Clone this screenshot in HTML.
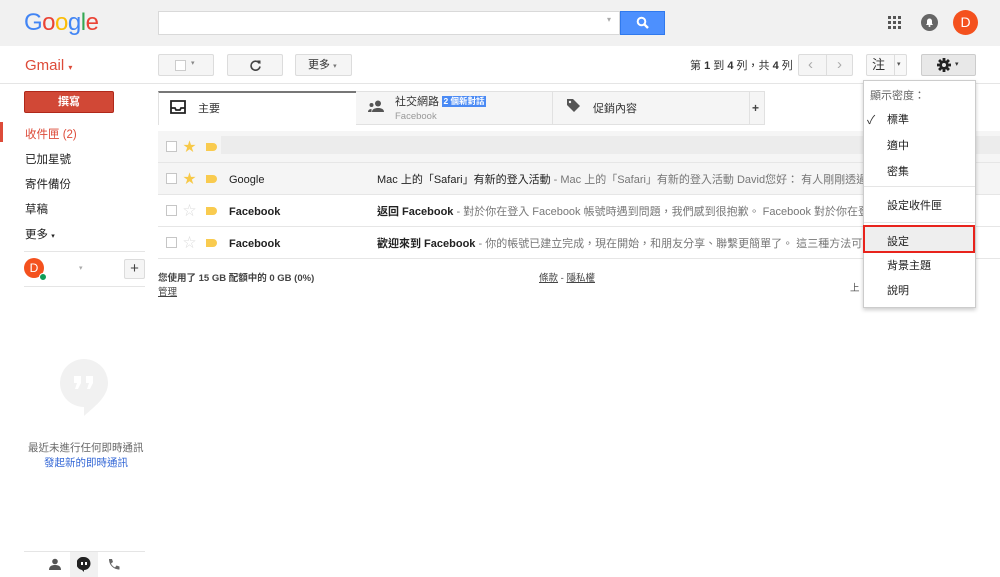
<!DOCTYPE html>
<html><head><meta charset="utf-8"><style>
*{margin:0;padding:0;box-sizing:border-box}
body{width:1000px;height:577px;overflow:hidden;background:#fff;font-family:"Liberation Sans","Noto Sans CJK TC",sans-serif;font-size:11px;color:#222;position:relative}
.a{position:absolute}
.btn{position:absolute;background:#f5f5f5;border:1px solid #dcdcdc;border-radius:2px}
.t{position:absolute;white-space:nowrap;line-height:1.6;margin-top:3px}
.btn .t{margin-top:0}
.row{position:absolute;left:158px;width:842px;border-bottom:1px solid #e6e6e6}
.cb{position:absolute;left:8px;width:11px;height:11px;border:1px solid #c6c6c6;background:#fff}
.lbl{position:absolute;left:48px;width:11px;height:8px;background:#f9cb4f;border-radius:0 4px 4px 0}
.mi{position:absolute;left:887px;font-size:11px;color:#222;line-height:1.6;margin-top:3px}
</style></head><body>
<div class="a" style="left:0;top:0;width:1000px;height:46px;background:#f1f1f1"></div>
<div class="a" style="left:24px;top:9px;font-size:24px;letter-spacing:-0.5px;line-height:28px;white-space:nowrap"><span style="color:#4285f4">G</span><span style="color:#ea4335">o</span><span style="color:#fbbc05">o</span><span style="color:#4285f4">g</span><span style="color:#34a853">l</span><span style="color:#ea4335">e</span></div>
<div class="a" style="left:158px;top:11px;width:462px;height:24px;background:#fff;border:1px solid #d9d9d9"></div>
<div class="a" style="left:607px;top:15px;color:#aaa;font-size:8px">▾</div>
<div class="a" style="left:620px;top:11px;width:45px;height:24px;background:#4d90fe;border:1px solid #3079ed"></div>
<svg class="a" style="left:636px;top:16px" width="14" height="14" viewBox="0 0 14 14"><circle cx="5.5" cy="5.5" r="3.8" fill="none" stroke="#fff" stroke-width="2"/><path d="M8.3 8.3L12 12" stroke="#fff" stroke-width="2.4"/></svg>
<svg class="a" style="left:888px;top:16px" width="14" height="14"><g fill="#555"><rect x="0" y="0" width="3" height="3"/><rect x="5" y="0" width="3" height="3"/><rect x="10" y="0" width="3" height="3"/><rect x="0" y="5" width="3" height="3"/><rect x="5" y="5" width="3" height="3"/><rect x="10" y="5" width="3" height="3"/><rect x="0" y="10" width="3" height="3"/><rect x="5" y="10" width="3" height="3"/><rect x="10" y="10" width="3" height="3"/></g></svg>
<svg class="a" style="left:921px;top:14px" width="17" height="17"><circle cx="8.5" cy="8.5" r="8.5" fill="#666"/><path d="M5 11h7l-1-1.5V7a2.5 2.5 0 0 0-5 0v2.5z" fill="#fff"/><circle cx="8.5" cy="12" r="1" fill="#fff"/></svg>
<div class="a" style="left:953px;top:10px;width:25px;height:25px;border-radius:50%;background:#f4511e;color:#fff;font-size:14px;text-align:center;line-height:25px">D</div>

<div class="t" style="left:25px;top:51px;font-size:15px;color:#dd4b39">Gmail <span style="font-size:8px">▾</span></div>
<div class="a" style="left:0;top:83px;width:1000px;height:1px;background:#e5e5e5"></div>
<div class="btn" style="left:158px;top:54px;width:56px;height:22px"><div class="a" style="left:16px;top:5px;width:11px;height:11px;border:1px solid #ccc;background:#fff"></div><div class="t" style="left:32px;top:3px;color:#888;font-size:7px">▾</div></div>
<div class="btn" style="left:227px;top:54px;width:56px;height:22px"><svg class="a" style="left:21px;top:4px" width="13" height="13"><path d="M10.5 4.5A4.5 4.5 0 1 0 11 7.5" fill="none" stroke="#444" stroke-width="1.6"/><path d="M8 1.5L11.5 1.5 11.5 5z" fill="#444"/></svg></div>
<div class="btn" style="left:295px;top:54px;width:57px;height:22px"><div class="t" style="left:12px;top:2px;font-size:11px;color:#333">更多 <span style="font-size:7px;color:#777">▾</span></div></div>

<div class="t" style="left:690px;top:55px;color:#333">第 <b>1</b> 到 <b>4</b> 列，共 <b>4</b> 列</div>
<div class="btn" style="left:798px;top:54px;width:55px;height:22px"><div class="a" style="left:27px;top:0;width:1px;height:20px;background:#ddd"></div><div class="a" style="left:9px;top:1px;color:#aaa;font-size:15px;line-height:18px">‹</div><div class="a" style="left:38px;top:1px;color:#aaa;font-size:15px;line-height:18px">›</div></div>
<div class="btn" style="left:866px;top:54px;width:41px;height:22px;background:#f8f8f8"><div class="a" style="left:5px;top:2px;font-size:13px;color:#333;line-height:16px;width:18px">注</div><div class="a" style="left:27px;top:0;width:1px;height:20px;background:#ddd"></div><div class="a" style="left:30px;top:6px;font-size:7px;color:#555;line-height:8px">▾</div></div>
<div class="btn" style="left:921px;top:54px;width:55px;height:22px;background:#e8e8e8;border-color:#ccc"><svg class="a" style="left:15px;top:3px" width="14" height="14" viewBox="0 0 14 14"><g fill="#222"><circle cx="7" cy="7" r="4.6"/><rect x="5.6" y="0" width="2.8" height="14"/><rect x="0" y="5.6" width="14" height="2.8"/><rect x="5.6" y="0" width="2.8" height="14" transform="rotate(45 7 7)"/><rect x="5.6" y="0" width="2.8" height="14" transform="rotate(-45 7 7)"/></g><circle cx="7" cy="7" r="2" fill="#e8e8e8"/></svg><div class="a" style="left:33px;top:6px;font-size:7px;color:#333;line-height:8px">▾</div></div>

<div class="a" style="left:24px;top:91px;width:90px;height:22px;background:#d14836;border:1px solid #b0281a;border-radius:2px;color:#fff;font-weight:bold;text-align:center;line-height:20px;font-size:11px">撰寫</div>
<div class="a" style="left:0;top:122px;width:3px;height:20px;background:#dd4b39"></div>
<div class="t" style="left:25px;top:123px;color:#dd4b39;font-size:11.5px">收件匣 (2)</div>
<div class="t" style="left:25px;top:148px;color:#222;font-size:11.5px">已加星號</div>
<div class="t" style="left:25px;top:173px;color:#222;font-size:11.5px">寄件備份</div>
<div class="t" style="left:25px;top:198px;color:#222;font-size:11.5px">草稿</div>
<div class="t" style="left:25px;top:223px;color:#222;font-size:11.5px">更多 <span style="font-size:7px">▾</span></div>
<div class="a" style="left:24px;top:251px;width:121px;height:1px;background:#e5e5e5"></div>
<div class="a" style="left:24px;top:258px;width:20px;height:20px;border-radius:50%;background:#f4511e;color:#fff;text-align:center;line-height:20px;font-size:12px">D</div>
<div class="a" style="left:39px;top:273px;width:8px;height:8px;border-radius:50%;background:#0f9d58;border:1px solid #fff"></div>
<div class="a" style="left:79px;top:264px;color:#aaa;font-size:7px">▾</div>
<div class="btn" style="left:124px;top:259px;width:21px;height:20px;font-size:15px;text-align:center;line-height:17px;color:#444">+</div>
<div class="a" style="left:24px;top:286px;width:121px;height:1px;background:#e5e5e5"></div>

<svg class="a" style="left:60px;top:359px" width="48" height="60"><path d="M24 0a24 24 0 0 1 24 24c0 14-14 24-24 33v-9A24 24 0 0 1 24 0z" fill="#f1f1f1"/><path d="M14 17h7v7l-3 6h-3l2-6h-3zM26 17h7v7l-3 6h-3l2-6h-3z" fill="#fff"/></svg>
<div class="t" style="left:28px;top:437px;color:#666;font-size:10.5px">最近未進行任何即時通訊</div>
<div class="t" style="left:44px;top:452px;color:#3367d6;font-size:10.5px">發起新的即時通訊</div>
<div class="a" style="left:24px;top:551px;width:121px;height:1px;background:#e5e5e5"></div>
<div class="a" style="left:70px;top:552px;width:28px;height:25px;background:#f1f1f1"></div>
<svg class="a" style="left:49px;top:558px" width="12" height="12"><circle cx="6" cy="3.5" r="2.8" fill="#555"/><path d="M0 12c0-4 3-5 6-5s6 1 6 5z" fill="#555"/></svg>
<svg class="a" style="left:77px;top:557px" width="14" height="15"><path d="M7 0a6.5 6.5 0 0 1 0 13v2l-2-2A6.5 6.5 0 0 1 7 0z" fill="#222"/><rect x="4" y="5" width="2" height="3" fill="#fff"/><rect x="8" y="5" width="2" height="3" fill="#fff"/></svg>
<svg class="a" style="left:107px;top:558px" width="13" height="13"><path d="M2 1l3 0 1 3-2 1.5c1 2 2 3 4 4l1.5-2 3 1 0 3c-6 0-10.5-4.5-10.5-10.5z" fill="#666"/></svg>

<div class="a" style="left:158px;top:91px;width:607px;height:34px;background:#f5f5f5;border:1px solid #e1e1e1"></div>
<div class="a" style="left:158px;top:91px;width:198px;height:34px;background:#fff;border-top:2px solid #777;border-left:1px solid #e1e1e1"></div>
<div class="a" style="left:552px;top:91px;width:1px;height:34px;background:#e1e1e1"></div>
<div class="a" style="left:749px;top:91px;width:1px;height:34px;background:#e1e1e1"></div>
<svg class="a" style="left:170px;top:100px" width="16" height="14"><path d="M1 1h14v12H1z M1 8h4l1 2h4l1-2h4" fill="none" stroke="#222" stroke-width="1.8"/></svg>
<div class="t" style="left:198px;top:98px;font-size:11px;color:#333">主要</div>
<svg class="a" style="left:368px;top:100px" width="16" height="12"><circle cx="10" cy="3.5" r="3" fill="#555"/><circle cx="3.5" cy="5" r="2" fill="#555"/><path d="M4 12c0-3 3-4 6-4s6 1 6 4z M0 12c0-2 1.5-3 3.5-3v3z" fill="#555"/></svg>
<div class="t" style="left:395px;top:91px;font-size:11px;color:#333">社交網路</div>
<div class="a" style="left:442px;top:96px;width:44px;height:11px;background:#4a8af4;color:#fff;font-size:8.5px;line-height:11px;text-align:center;font-weight:bold">2 個新對話</div>
<div class="t" style="left:395px;top:106px;font-size:9.5px;color:#999">Facebook</div>
<svg class="a" style="left:566px;top:98px" width="15" height="15"><path d="M1 1h6l7 7-6 6-7-7z" fill="#555"/><circle cx="4" cy="4" r="1.2" fill="#f5f5f5"/></svg>
<div class="t" style="left:593px;top:98px;font-size:11px;color:#333">促銷內容</div>
<div class="t" style="left:752px;top:96px;font-size:12px;color:#444;font-weight:bold">+</div>

<div class="row" style="top:131px;height:32px;background:#f5f5f5"><div class="cb" style="top:10px"></div><div class="t" style="left:25px;top:3px;color:#f7c948;font-size:13px">★</div><div class="lbl" style="top:12px"></div><div class="a" style="left:63px;top:5px;width:779px;height:18px;background:#ececec"></div></div>
<div class="row" style="top:163px;height:32px;background:#f5f5f5"><div class="cb" style="top:10px"></div><div class="t" style="left:25px;top:3px;color:#f7c948;font-size:13px">★</div><div class="lbl" style="top:12px"></div><div class="t" style="left:71px;top:6px;color:#222">Google</div><div class="t" style="left:219px;top:6px;color:#222">Mac 上的「Safari」有新的登入活動 <span style="color:#777">- Mac 上的「Safari」有新的登入活動 David您好： 有人剛剛透過</span></div></div>
<div class="row" style="top:195px;height:32px"><div class="cb" style="top:10px"></div><div class="t" style="left:25px;top:3px;color:#ddd;font-size:13px">☆</div><div class="lbl" style="top:12px"></div><div class="t" style="left:71px;top:6px;font-weight:bold">Facebook</div><div class="t" style="left:219px;top:6px"><b>返回 Facebook</b> <span style="color:#777">- 對於你在登入 Facebook 帳號時遇到問題，我們感到很抱歉。 Facebook 對於你在登</span></div></div>
<div class="row" style="top:227px;height:32px"><div class="cb" style="top:10px"></div><div class="t" style="left:25px;top:3px;color:#ddd;font-size:13px">☆</div><div class="lbl" style="top:12px"></div><div class="t" style="left:71px;top:6px;font-weight:bold">Facebook</div><div class="t" style="left:219px;top:6px"><b>歡迎來到 Facebook</b> <span style="color:#777">- 你的帳號已建立完成，現在開始，和朋友分享、聯繫更簡單了。 這三種方法可</span></div></div>

<div class="t" style="left:158px;top:268px;font-size:9.5px;color:#444;font-weight:bold">您使用了 15 GB 配額中的 0 GB (0%)</div>
<div class="t" style="left:158px;top:282px;font-size:9.5px;color:#444;text-decoration:underline">管理</div>
<div class="t" style="left:539px;top:268px;font-size:9.5px;color:#444"><u>條款</u> - <u>隱私權</u></div>
<div class="t" style="left:850px;top:278px;font-size:9.5px;color:#555">上</div>

<div class="a" style="left:863px;top:80px;width:113px;height:228px;background:#fff;border:1px solid #ccc;box-shadow:0 2px 4px rgba(0,0,0,.2)"></div>
<div class="t" style="left:870px;top:85px;color:#666;font-size:11px">顯示密度：</div>
<div class="t" style="left:867px;top:108px;color:#333;font-size:12px">✓</div>
<div class="mi" style="top:109px">標準</div>
<div class="mi" style="top:135px">適中</div>
<div class="mi" style="top:161px">密集</div>
<div class="a" style="left:864px;top:186px;width:111px;height:1px;background:#e5e5e5"></div>
<div class="mi" style="top:195px">設定收件匣</div>
<div class="a" style="left:864px;top:222px;width:111px;height:1px;background:#e5e5e5"></div>
<div class="a" style="left:863px;top:225px;width:112px;height:28px;background:#eee;border:2px solid #e8231c"></div>
<div class="mi" style="top:231px">設定</div>
<div class="mi" style="top:255px">背景主題</div>
<div class="mi" style="top:280px">說明</div>
</body></html>
